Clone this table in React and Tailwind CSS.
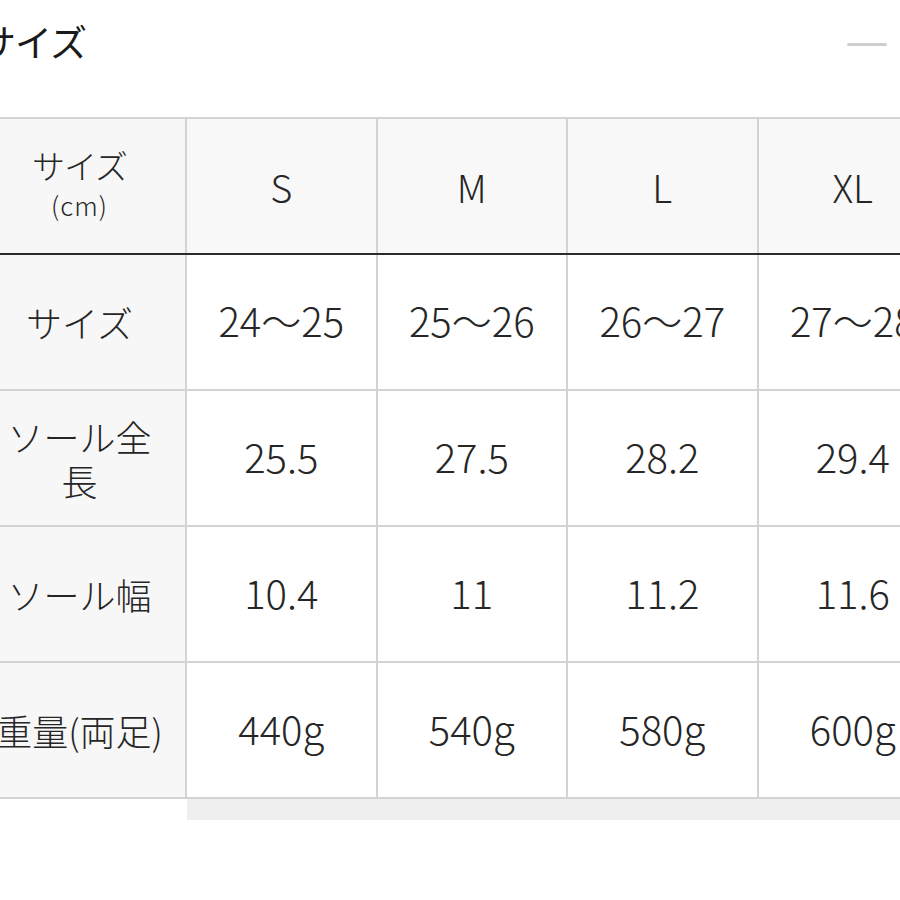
import React from "react";

const font = { fontFamily: '"Noto Sans CJK JP", "Noto Sans", sans-serif' };

const cols = ["S", "M", "L", "XL"];
const rows = [
  { label: "サイズ", values: ["24～25", "25～26", "26～27", "27～28"] },
  { label: "ソール全長", values: ["25.5", "27.5", "28.2", "29.4"] },
  { label: "ソール幅", values: ["10.4", "11", "11.2", "11.6"] },
  { label: "重量(両足)", values: ["440g", "540g", "580g", "600g"] },
];

function FirstCell({ children, header }) {
  return (
    <div
      className={`w-[213px] shrink-0 h-full bg-[#f7f7f7] border-r-2 border-[#d3d3d3] flex flex-col items-center justify-center text-center ${
        header ? "" : "px-[16px]"
      }`}
    >
      {children}
    </div>
  );
}

function Cell({ children, header }) {
  return (
    <div
      className={`w-[190.5px] shrink-0 h-full border-r-2 border-[#d3d3d3] flex items-center justify-center whitespace-nowrap font-light ${
        header ? "bg-[#f8f8f8] text-[38px]" : "bg-white text-[40px] pb-[4px]"
      }`}
    >
      {children}
    </div>
  );
}

export default function App() {
  return (
    <div
      className="w-[900px] h-[900px] bg-white overflow-hidden text-[#262626]"
      style={font}
    >
      <div className="h-[84px] flex items-center justify-between">
        <div className="ml-[-21px] text-[37px] font-normal leading-none tracking-[-1px] pb-[2px] text-[#1a1a1a]">
          サイズ
        </div>
        <div className="w-[40px] h-[3px] rounded-full bg-[#cfcfcf] mr-[13px] mt-[4px]" />
      </div>
      <div className="mt-[33px] ml-[-26px] w-[1200px]">
        <div className="border-t-2 border-[#d3d3d3]">
          <div className="flex h-[136px] border-b-2 border-[#2b2b2b]">
            <FirstCell header>
              <div className="text-[33px] leading-[42px] tracking-[-1px] font-light mb-[2px]">サイズ</div>
              <div className="text-[26px] leading-[34px] tracking-[1px] font-light mb-[6px]">(cm)</div>
            </FirstCell>
            {cols.map((c) => (
              <Cell key={c} header>
                {c}
              </Cell>
            ))}
          </div>
          {rows.map((r) => (
            <div key={r.label} className="flex h-[136px] border-b-2 border-[#d3d3d3]">
              <FirstCell>
                <div className="text-[36px] leading-[44px] font-light">{r.label}</div>
              </FirstCell>
              {r.values.map((v, i) => (
                <Cell key={i}>{v}</Cell>
              ))}
            </div>
          ))}
        </div>
        <div className="flex">
          <div className="w-[213px] shrink-0" />
          <div className="flex-1 h-[21px] bg-[#efefef]" />
        </div>
      </div>
    </div>
  );
}
